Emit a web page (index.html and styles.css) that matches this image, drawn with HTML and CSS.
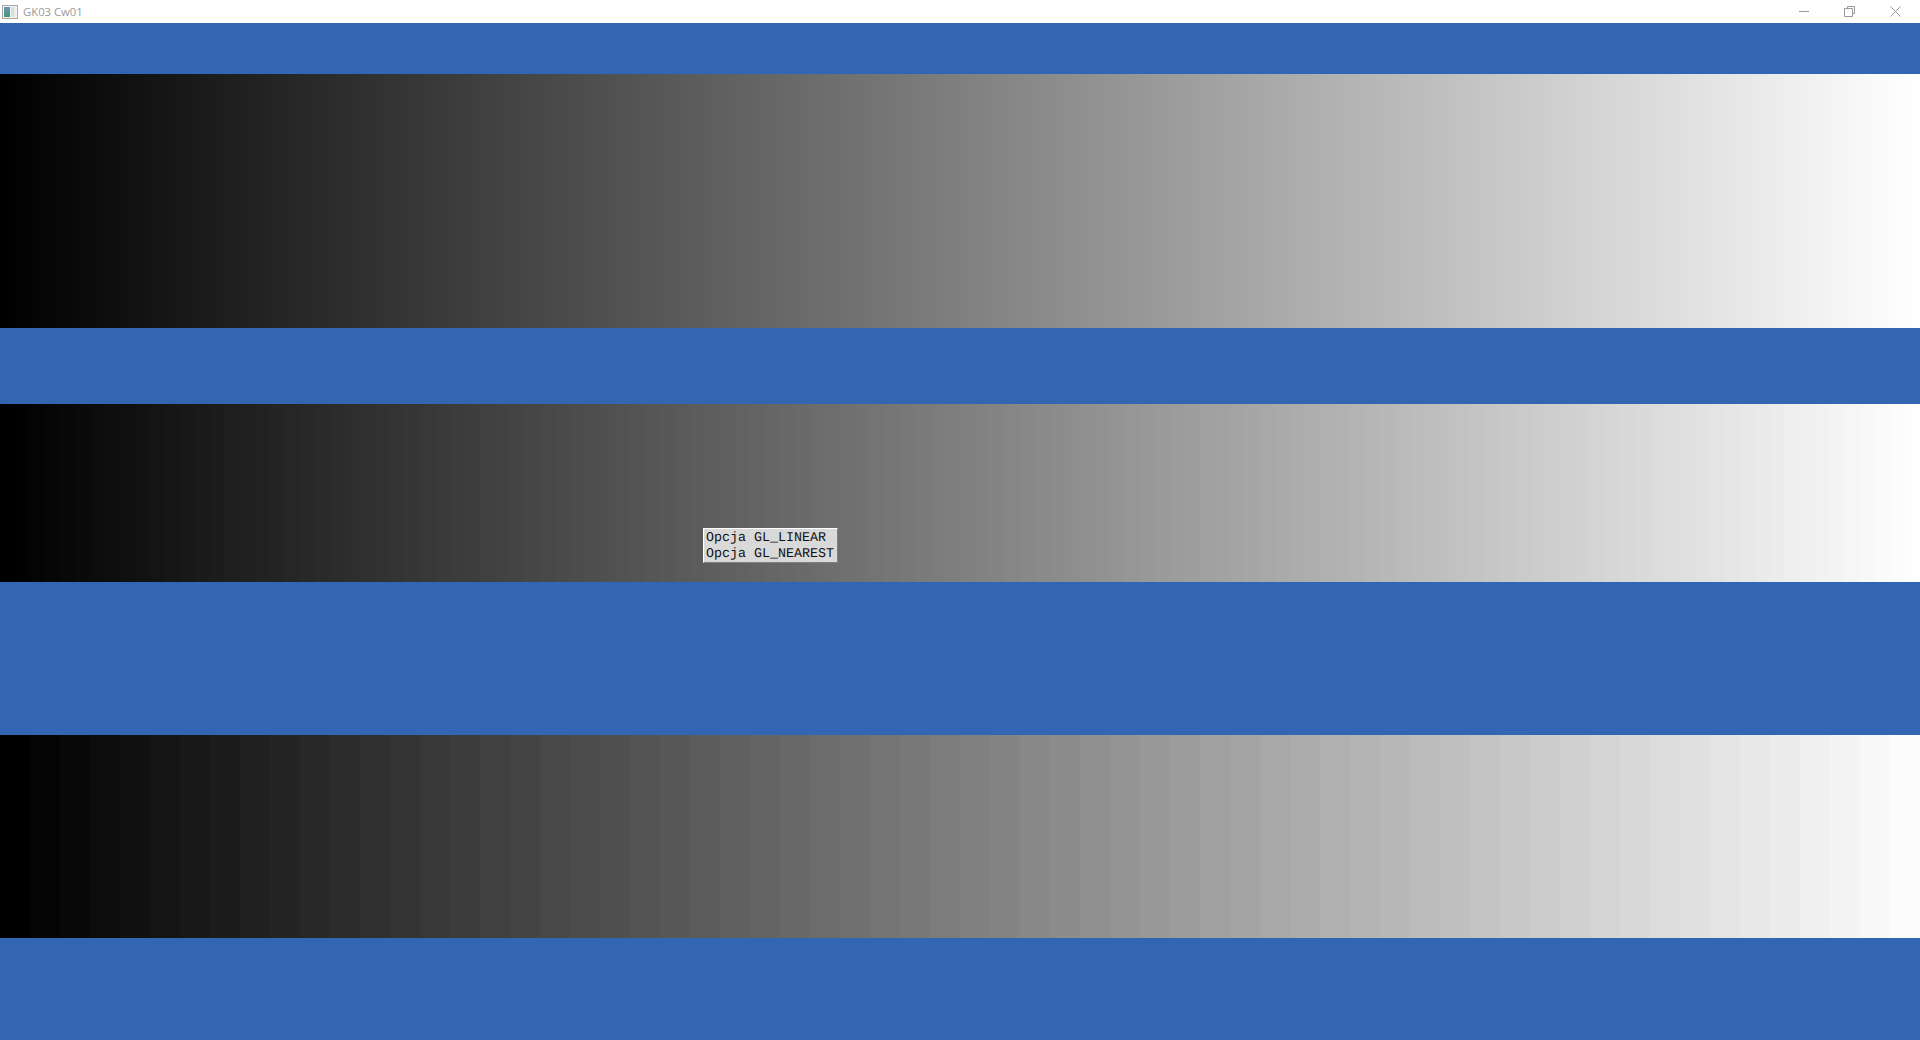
FILE: index.html
```html
<!DOCTYPE html>
<html lang="pl">
<head>
  <meta charset="UTF-8">
  <meta name="viewport" content="width=device-width, initial-scale=1.0">
  <title>GK03 Cw01</title>
  <link rel="stylesheet" href="styles.css">
</head>
<body>
  <header class="titlebar">
    <svg class="app-icon" width="16" height="14" viewBox="0 0 16 14">
      <defs>
        <linearGradient id="icon-pane" x1="0" y1="0" x2="0" y2="1">
          <stop offset="0" stop-color="#6f93b5"/>
          <stop offset="1" stop-color="#3f9a7c"/>
        </linearGradient>
      </defs>
      <rect x="0.5" y="0.5" width="15" height="13" fill="#f4f4f4" stroke="#a8a8a8"/>
      <rect x="2" y="2" width="6" height="10" fill="url(#icon-pane)"/>
      <rect x="9" y="2" width="3" height="10" fill="#d5e0da"/>
      <rect x="12" y="2" width="2" height="10" fill="#ececec"/>
    </svg>
    <span class="title">GK03 Cw01</span>
    <div class="win-buttons">
      <svg width="12" height="12" viewBox="0 0 12 12"><path d="M1 5.5H11" stroke="#999" fill="none"/></svg>
      <svg width="12" height="12" viewBox="0 0 12 12"><path d="M3.5 2.5V0.5H10.5V7.5H8.5M0.5 2.5H8.5V10.5H0.5Z" stroke="#999" fill="none"/></svg>
      <svg width="12" height="12" viewBox="0 0 12 12"><path d="M0.5 0.5L10.5 10.5M10.5 0.5L0.5 10.5" stroke="#999" fill="none"/></svg>
    </div>
  </header>

  <main class="scene">
    <div class="ramp ramp-256" data-levels="256"></div>
    <div class="ramp ramp-128" data-levels="128">
      <div class="menu">
        <div class="menu-item">Opcja GL_LINEAR</div>
        <div class="menu-item">Opcja GL_NEAREST</div>
      </div>
    </div>
    <div class="ramp ramp-64" data-levels="64"></div>
  </main>

  <script src="ramps.js"></script>
</body>
</html>
```

FILE: styles.css
```css
html, body {
  height: 100%;
}
body {
  margin: 0;
  display: flex;
  flex-direction: column;
  background-color: #3366b2;
  overflow: hidden;
}
.titlebar {
  height: 23px;
  flex-shrink: 0;
  display: flex;
  align-items: center;
  padding-left: 2px;
  background-color: #fff;
}
.app-icon {
  margin-right: 5px;
}
.title {
  font-family: "Open Sans", "Liberation Sans", sans-serif;
  font-size: 11.3px;
  color: #999;
}
.win-buttons {
  margin-left: auto;
  display: flex;
  gap: 34px;
  padding-right: 18px;
}
.scene {
  flex: 1;
  display: flex;
  flex-direction: column;
  padding-top: 51px;
}
.ramp {
  display: flex;
  position: relative;
}
.ramp-256 {
  height: 254px;
}
.ramp-128 {
  height: 178px;
  margin-top: 76px;
}
.ramp-64 {
  height: 203px;
  margin-top: 153px;
}
.step {
  flex: 1;
}
.menu {
  position: absolute;
  left: 703px;
  top: 124px;
  width: 131px;
  height: 31px;
  padding: 2px 0 0 2px;
  background-color: #d9d9d9;
  border-top: 1px solid #fff;
  border-left: 1px solid #fff;
  border-right: 1px solid #7f7f7f;
  border-bottom: 1px solid #7f7f7f;
  font-family: "Liberation Mono", monospace;
  font-size: 13.33px;
  text-rendering: geometricPrecision;
  color: #111;
}
.menu-item {
  height: 16px;
  line-height: 16px;
  white-space: nowrap;
}
```

FILE: ramps.js
```js
document.querySelectorAll('.ramp').forEach(ramp => {
  const levels = Number(ramp.dataset.levels);
  const stepSize = 256 / levels;
  const menu = ramp.firstElementChild;
  for (let i = 0; i < levels; i++) {
    const gray = i * stepSize;
    const step = document.createElement('div');
    step.className = 'step';
    step.style.backgroundColor = `rgb(${gray}, ${gray}, ${gray})`;
    ramp.insertBefore(step, menu);
  }
});
```
